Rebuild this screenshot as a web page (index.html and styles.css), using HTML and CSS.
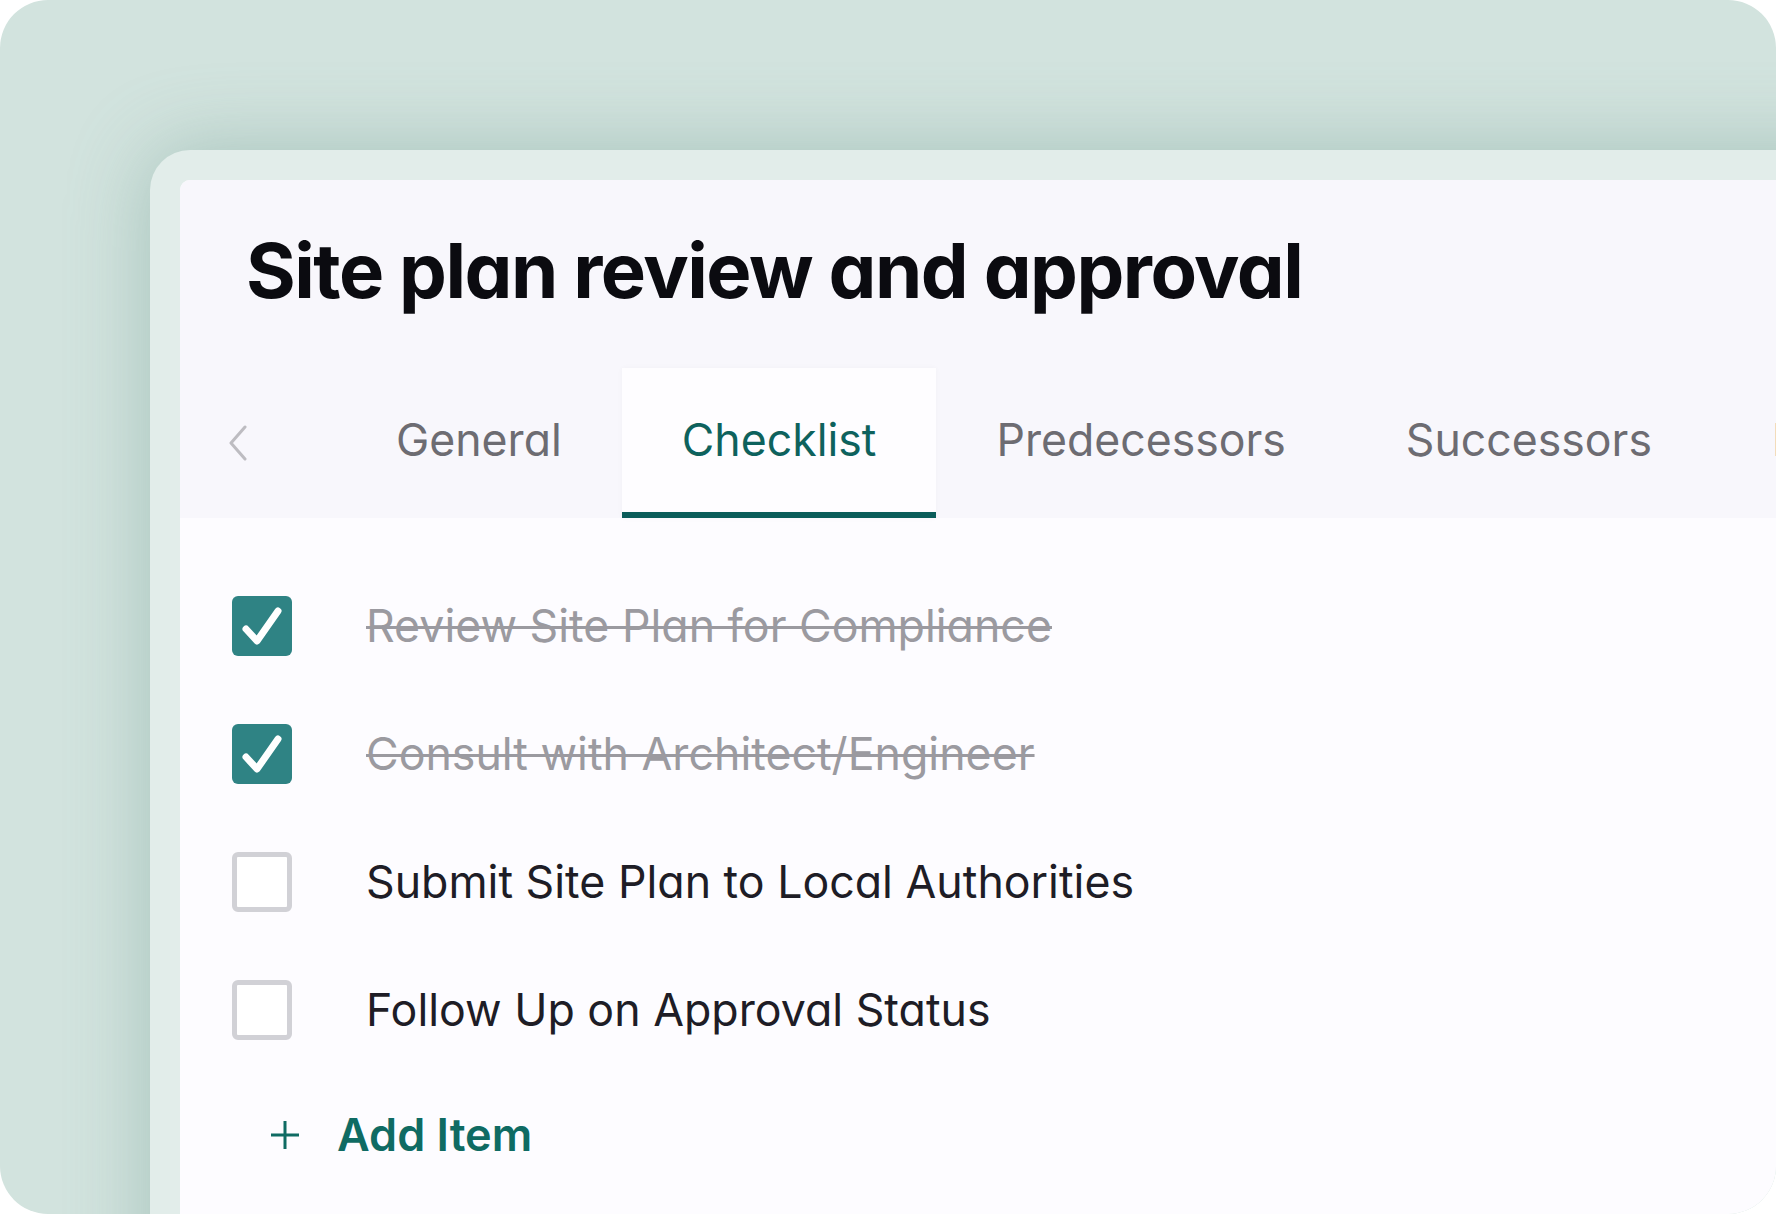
FILE: index.html
```html
<!DOCTYPE html>
<html lang="en">
<head>
    <meta charset="UTF-8">
    <title>Site plan review and approval</title>

    <link rel="stylesheet" href="styles.css">
</head>
<body>
    <!-- fundo verde com o cartão da tarefa -->
    <div class="stage">
        <div class="frame">
            <div class="panel">
                <h1 class="task-title">Site plan review and approval</h1>

                <!-- abas da tarefa -->
                <nav class="tabs">
                    <button class="tab-back" type="button" aria-label="Voltar">
                        <svg width="20" height="36" viewBox="0 0 20 36">
                            <path d="M17 2 L3 18 L17 34" fill="none" stroke="#bdbcc1" stroke-width="3" stroke-linecap="round" stroke-linejoin="round"/>
                        </svg>
                    </button>
                    <a class="tab">General</a>
                    <a class="tab active">Checklist</a>
                    <a class="tab">Predecessors</a>
                    <a class="tab">Successors</a>
                    <a class="tab">Documents</a>
                </nav>

                <!-- lista de verificação -->
                <ul class="checklist">
                    <li class="item done">
                        <span class="box">
                            <svg width="60" height="60" viewBox="0 0 60 60"><path d="M14 33 L25 45 L46 15" fill="none" stroke="#fff" stroke-width="7" stroke-linecap="round" stroke-linejoin="round"/></svg>
                        </span>
                        <span class="label">Review Site Plan for Compliance</span>
                    </li>
                    <li class="item done">
                        <span class="box">
                            <svg width="60" height="60" viewBox="0 0 60 60"><path d="M14 33 L25 45 L46 15" fill="none" stroke="#fff" stroke-width="7" stroke-linecap="round" stroke-linejoin="round"/></svg>
                        </span>
                        <span class="label">Consult with Architect/Engineer</span>
                    </li>
                    <li class="item">
                        <span class="box"></span>
                        <span class="label">Submit Site Plan to Local Authorities</span>
                    </li>
                    <li class="item">
                        <span class="box"></span>
                        <span class="label">Follow Up on Approval Status</span>
                    </li>
                </ul>

                <button class="add-item" type="button">
                    <svg width="32" height="32" viewBox="0 0 32 32">
                        <path d="M16 2 V30 M2 16 H30" stroke="#0f6b63" stroke-width="3"/>
                    </svg>
                    Add Item
                </button>
            </div>
        </div>
    </div>
</body>
</html>
```

FILE: styles.css
```css
body{
    margin: 0;
    background: #fff;
    font-family: Inter, "Noto Sans", sans-serif;
    font-feature-settings: "cv11";
}
.stage{
    height: 100vh;
    box-sizing: border-box;
    overflow: hidden;
    padding: 150px 0 0 150px;
    border-radius: 48px;
    background: #d2e3de;
}
.frame{
    width: 1700px;
    min-height: 1200px;
    padding: 30px;
    border-radius: 40px 0 0 0;
    background: #e2edea;
    box-shadow: 0 0 80px rgba(110, 155, 145, 0.45);
}
.panel{
    min-height: 1200px;
    border-radius: 10px 0 0 0;
    background: #fdfcff;
    overflow: hidden;
}
.task-title{
    margin: 0;
    padding: 44px 0 52px 66px;
    background: #f8f7fc;
    font-size: 76px;
    line-height: 92px;
    font-weight: 700;
    letter-spacing: -0.02em;
    color: #0b0b10;
}
.tabs{
    display: flex;
    align-items: stretch;
    background: #f8f7fc;
    white-space: nowrap;
}
.tab-back{
    width: 156px;
    padding: 0 0 0 48px;
    border: none;
    background: none;
    display: flex;
    align-items: center;
    flex-shrink: 0;
}
.tab{
    padding: 45px 60px;
    font-size: 44.6px;
    line-height: 54px;
    color: #6d6c72;
    border-bottom: 6px solid transparent;
    flex-shrink: 0;
}
.tab.active{
    color: #0e625d;
    background: #fefdff;
    border-bottom-color: #0b5d5a;
    box-shadow: 0 0 6px rgba(0, 0, 0, 0.03);
}
.checklist{
    list-style: none;
    margin: 0;
    padding: 44px 0 0 52px;
}
.item{
    display: flex;
    align-items: center;
    gap: 74px;
    height: 128px;
}
.box{
    width: 60px;
    height: 60px;
    box-sizing: border-box;
    border: 5px solid #d1d1d6;
    border-radius: 6px;
    background: #fff;
    flex-shrink: 0;
}
.done .box{
    border: none;
    background: #2f8384;
}
.label{
    font-size: 44.7px;
    line-height: 54px;
    color: #1e1d26;
}
.done .label{
    color: #9b9aa0;
    text-decoration: line-through;
    text-decoration-thickness: 3px;
}
.add-item{
    display: flex;
    align-items: center;
    gap: 36px;
    margin: 34px 0 0 89px;
    padding: 0;
    border: none;
    background: none;
    font-family: inherit;
    font-feature-settings: "cv11";
    font-size: 45px;
    line-height: 54px;
    font-weight: 600;
    color: #0f6b63;
}
```
